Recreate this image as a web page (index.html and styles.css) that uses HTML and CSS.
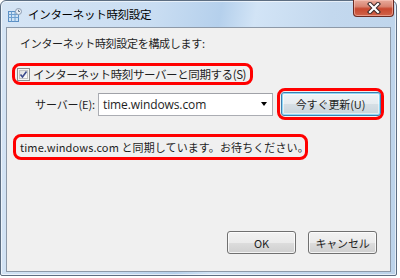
FILE: index.html
```html
<!DOCTYPE html>
<html lang="ja">
<head>
<meta charset="utf-8">
<link rel="stylesheet" href="styles.css">
</head>
<body>
<div class="window">
  <div class="titlebar">
    <svg class="app-icon" width="14" height="14" viewBox="0 0 14 14">
      <rect x="0.5" y="3.5" width="10" height="10" fill="#cfe3f5" stroke="#5b8fc4"/>
      <path d="M0.5 6.5H10.5M0.5 9.5H10.5M3.5 3.5V13.5M7 3.5V13.5" stroke="#6fa0d0" stroke-width="1"/>
      <circle cx="10.5" cy="3.5" r="3" fill="#e8eef5" stroke="#8a9bb0"/>
      <path d="M10.5 1.8V3.5H12" stroke="#4a5a70" stroke-width="0.8" fill="none"/>
    </svg>
    <span class="title">インターネット時刻設定</span>
    <div class="close-btn">
      <svg width="16" height="12" viewBox="0 0 16 12">
        <path d="M4 2L12 10M12 2L4 10" stroke="#3a2a2a" stroke-width="4.2" stroke-linecap="square"/>
        <path d="M4 2L12 10M12 2L4 10" stroke="#ffffff" stroke-width="2.2" stroke-linecap="square"/>
      </svg>
    </div>
  </div>
  <div class="client">
    <div class="heading">インターネット時刻設定を構成します:</div>
    <div class="mark mark-check">
      <span class="checkbox">
        <svg width="13" height="13" viewBox="0 0 13 13">
          <defs>
            <linearGradient id="cbg" x1="0" y1="0" x2="1" y2="1">
              <stop offset="0" stop-color="#dcdcdc"/>
              <stop offset="1" stop-color="#ffffff"/>
            </linearGradient>
          </defs>
          <rect x="0.5" y="0.5" width="12" height="12" fill="#f4f4f4" stroke="#8e8f8f"/>
          <rect x="2.5" y="2.5" width="8" height="8" fill="url(#cbg)" stroke="#c4c4c4"/>
          <path d="M3.5 6.5L5.5 9L9.5 3.5" stroke="#3c4a8c" stroke-width="1.6" fill="none"/>
        </svg>
      </span>
      <span class="label">インターネット時刻サーバーと同期する(S)</span>
    </div>
    <div class="server-row">
      <span class="server-label">サーバー(E):</span>
      <div class="combo">
        <span class="combo-text">time.windows.com</span>
        <span class="combo-arrow"></span>
      </div>
      <div class="mark mark-btn">
        <div class="btn btn-focus">今すぐ更新(U)</div>
      </div>
    </div>
    <div class="mark mark-status">time.windows.com と同期しています。お待ちください。</div>
    <div class="footer">
      <div class="btn btn-dlg">OK</div>
      <div class="btn btn-dlg">キャンセル</div>
    </div>
  </div>
</div>
</body>
</html>
```
FILE: styles.css
```css
html, body {
  margin: 0;
  padding: 0;
  background: #ffffff;
}
body {
  width: 400px;
  height: 278px;
  overflow: hidden;
  font-family: "Noto Sans CJK JP", "Noto Sans", sans-serif;
  font-size: 11px;
  color: #1e1e1e;
  white-space: nowrap;
}
.window {
  width: 395px;
  height: 274px;
  border: 1px solid #5d6e82;
  border-radius: 6px 6px 2px 2px;
  background: linear-gradient(100deg, #d6e5f5 0%, #c9ddf2 35%, #b5d0ec 50%, #d2e4f6 58%, #c3d8ee 75%, #bcd3ea 100%);
  box-shadow: inset 0 0 0 1px rgba(255,255,255,0.6);
  display: flex;
  flex-direction: column;
}
.titlebar {
  height: 26px;
  display: flex;
  align-items: flex-start;
  position: relative;
}
.app-icon {
  margin: 7px 0 0 7px;
}
.title {
  margin: 5px 0 0 6px;
  font-size: 11.5px;
  line-height: 16px;
  color: #000;
  letter-spacing: -0.3px;
}
.close-btn {
  position: absolute;
  right: 2px;
  top: -1px;
  width: 41px;
  height: 17px;
  box-sizing: border-box;
  border: 1px solid #6b2a22;
  border-top: none;
  border-radius: 0 0 4px 4px;
  background: linear-gradient(#e8ab9c 0%, #d98572 40%, #c8482f 55%, #d0644a 100%);
  box-shadow: inset 0 0 0 1px rgba(255,210,200,0.5);
  display: flex;
  align-items: center;
  justify-content: center;
}
.client {
  margin: 0 5px;
  height: 245px;
  box-sizing: border-box;
  border: 1px solid #8d99a8;
  background: #f0f0f0;
  display: flex;
  flex-direction: column;
}
.heading {
  margin: 7px 0 0 13px;
  line-height: 16px;
  letter-spacing: -0.3px;
}
.mark {
  border: 3px solid #ff0000;
  border-radius: 8px;
  box-sizing: border-box;
}
.mark-check {
  margin: 12px 0 0 5px;
  width: 241px;
  height: 22px;
  display: flex;
  align-items: center;
  padding-left: 2px;
}
.checkbox {
  width: 13px;
  height: 13px;
  display: block;
}
.checkbox svg { display: block; }
.label {
  margin-left: 3px;
  line-height: 16px;
  font-size: 11.5px;
  letter-spacing: -0.4px;
}
.server-row {
  display: flex;
  align-items: center;
  margin-top: 3px;
  height: 32px;
}
.server-label {
  margin-left: 28px;
  width: 63px;
  letter-spacing: -0.1px;
}
.combo {
  width: 175px;
  height: 23px;
  box-sizing: border-box;
  border: 1px solid #abadb3;
  border-top-color: #a0a2a8;
  background: #fff;
  display: flex;
  align-items: center;
  justify-content: space-between;
  padding: 0 4px 0 4px;
}
.combo-text {
  font-family: "Open Sans", "Noto Sans", sans-serif;
  font-size: 12px;
  letter-spacing: -0.1px;
}
.combo-arrow {
  width: 0;
  height: 0;
  border-left: 3.5px solid transparent;
  border-right: 3.5px solid transparent;
  border-top: 4px solid #000;
  margin-right: 1px;
}
.mark-btn {
  margin-left: 4px;
  width: 107px;
  height: 32px;
  display: flex;
  align-items: center;
  justify-content: center;
}
.btn {
  box-sizing: border-box;
  border: 1px solid #707070;
  border-radius: 3px;
  background: linear-gradient(#f2f2f2 0%, #ebebeb 50%, #dddddd 51%, #cfcfcf 100%);
  box-shadow: inset 0 0 0 1px rgba(255,255,255,0.75);
  display: flex;
  align-items: center;
  justify-content: center;
  line-height: 16px;
}
.btn-focus {
  width: 100px;
  height: 24px;
  border-color: #3c7fb1;
  box-shadow: inset 0 0 0 1px #8fd8f6, inset 0 0 0 2px rgba(255,255,255,0.5);
  background: linear-gradient(#f0f4f7 0%, #e6ecf0 50%, #d6dfe5 51%, #c8d3db 100%);
  letter-spacing: -0.1px;
}
.mark-status {
  margin: 14px 0 0 6px;
  width: 295px;
  height: 26px;
  display: flex;
  align-items: center;
  padding-left: 4px;
  letter-spacing: 0.1px;
}
.footer {
  margin-top: auto;
  margin-bottom: 17px;
  display: flex;
  justify-content: flex-end;
  gap: 12px;
  padding-right: 13px;
}
.btn-dlg {
  width: 69px;
  height: 23px;
  letter-spacing: -0.2px;
}
```
